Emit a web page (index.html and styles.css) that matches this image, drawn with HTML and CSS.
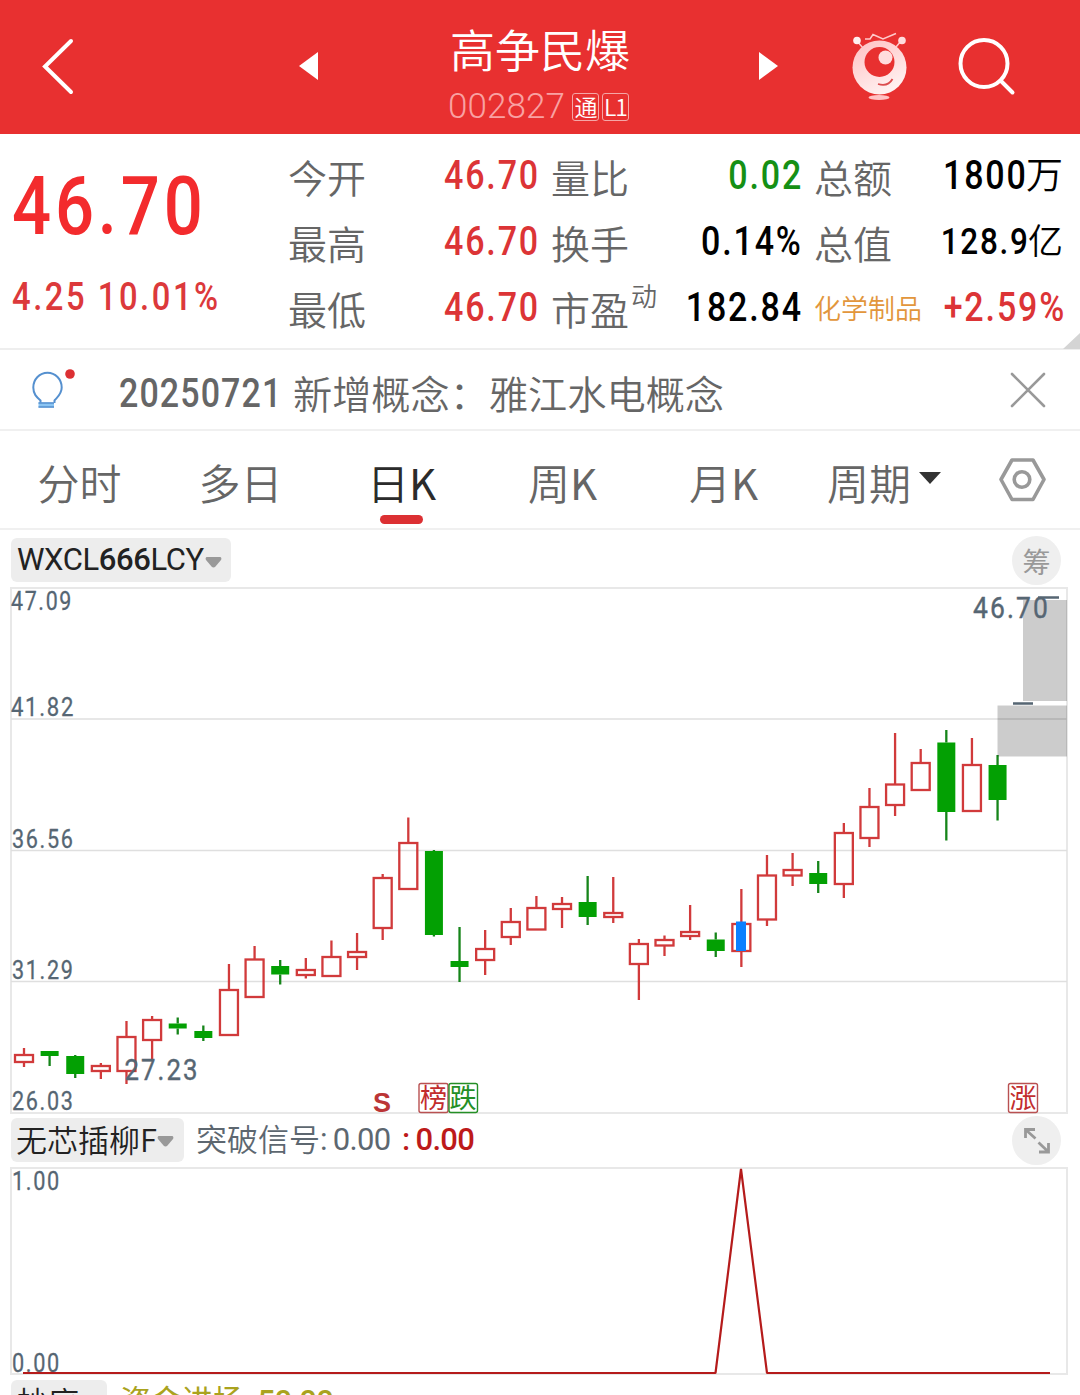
FILE: index.html
```html
<!DOCTYPE html>
<html lang="zh-CN">
<head>
<meta charset="utf-8">
<title>高争民爆 002827</title>
<link rel="stylesheet" href="styles.css">
</head>
<body>
<header class="header">
  <svg class="back" width="40" height="60" viewBox="0 0 40 60"><path d="M31 5 5 30.500 31 56" fill="none" stroke="#fff" stroke-width="4" stroke-linecap="round"/></svg>
  <svg class="prev" width="20" height="28" viewBox="0 0 20 28"><path d="M19 0V28L0 14Z" fill="#fff"/></svg>
  <div class="stock">
    <h1 class="stock-name">高争民爆</h1>
    <div class="stock-code"><span class="code">002827</span><span class="tag">通</span><span class="tag">L1</span></div>
  </div>
  <svg class="next" width="20" height="28" viewBox="0 0 20 28"><path d="M0 0V28L19 14Z" fill="#fff"/></svg>
  <svg class="robot" width="60" height="74" viewBox="850 30 60 74">
    <defs><linearGradient id="skin" x1="0" y1="0" x2="0.5" y2="1"><stop offset="0" stop-color="#ffc2c4"/><stop offset="0.35" stop-color="#ffd0d1"/><stop offset="1" stop-color="#fff0f0"/></linearGradient></defs>
    <g stroke="#ffc9ca" fill="none" stroke-width="1.500"><path d="M857 41 863 48M901 41 896 47"/><path d="M865 39H870L873 34.500 883 39 896 33.500"/></g>
    <circle cx="857" cy="40.500" r="3.800" fill="#fff0f0"/><circle cx="902" cy="40.500" r="3.800" fill="#ffdcdd"/>
    <circle cx="879.500" cy="67.500" r="27" fill="url(#skin)"/>
    <circle cx="879.500" cy="62" r="15" fill="#e83030"/><circle cx="885.500" cy="57.500" r="7" fill="#ffdcdd"/>
    <path d="M878 84Q888 87 892.500 79" fill="none" stroke="#dc4b4d" stroke-width="1.800"/>
    <ellipse cx="879" cy="97.500" rx="10.500" ry="2.400" fill="#ffc2c4"/>
  </svg>
  <svg class="search" width="60" height="62" viewBox="956 36 60 62"><g fill="none" stroke="#fff" stroke-width="4" stroke-linecap="round"><circle cx="984" cy="63.500" r="23.500"/><path d="M1001 81 1012.500 92.500"/></g></svg>
</header>

<section class="quote">
  <div class="price-block">
    <div class="price"><span class="num">46.70</span></div>
    <div class="change"><span class="num">4.25 10.01%</span></div>
  </div>
  <dl class="facts facts-a">
    <div><dt>今开</dt><dd class="up num">46.70</dd></div>
    <div><dt>最高</dt><dd class="up num">46.70</dd></div>
    <div><dt>最低</dt><dd class="up num">46.70</dd></div>
  </dl>
  <dl class="facts facts-b">
    <div><dt>量比</dt><dd class="down num">0.02</dd></div>
    <div><dt>换手</dt><dd class="num">0.14%</dd></div>
    <div><dt>市盈<sup>动</sup></dt><dd class="num">182.84</dd></div>
  </dl>
  <dl class="facts facts-c">
    <div><dt>总额</dt><dd><span class="num">1800</span><i>万</i></dd></div>
    <div><dt>总值</dt><dd class="small"><span class="num">128.9</span><i>亿</i></dd></div>
    <div><dt class="sector">化学制品</dt><dd class="up num">+2.59%</dd></div>
  </dl>
  <svg class="corner" width="17" height="16" viewBox="0 0 17 16"><path d="M17 0V16H0Z" fill="#d4d4d4"/></svg>
</section>

<section class="notice">
  <svg class="bulb" width="48" height="44" viewBox="30 367 48 44">
    <path d="M40.500 403V400.500C36.500 397 33.300 394 33.300 387.500A14.200 14.800 0 0 1 61.700 387.500C61.700 394 57.500 397 54.500 400.500V403" fill="none" stroke="#5590cf" stroke-width="2"/>
    <rect x="38.500" y="402.500" width="15.500" height="5" fill="#8bc5f3"/><path d="M38.500 403H54M38.500 407H54" stroke="#5590cf" stroke-width="1.600"/>
    <circle cx="70" cy="374" r="4.800" fill="#dc3033"/>
  </svg>
  <p class="notice-text"><span class="num">20250721</span><span>新增概念：雅江水电概念</span></p>
  <svg class="close" width="36" height="36" viewBox="0 0 36 36"><path d="M2 2 34 34M34 2 2 34" stroke="#999" stroke-width="2.600" stroke-linecap="round"/></svg>
</section>

<nav class="tabs">
  <span class="tab">分时</span><span class="tab">多日</span><span class="tab active">日<b>K</b></span><span class="tab">周<b>K</b></span><span class="tab">月<b>K</b></span><span class="tab period">周期<svg width="22" height="12" viewBox="0 0 22 12"><path d="M0 0H22L11 12Z" fill="#333"/></svg></span>
  <svg class="settings" width="48" height="46" viewBox="998 457 48 46"><g fill="none" stroke="#999" stroke-width="3.600" stroke-linejoin="round"><path d="M1012 460H1033L1044 479.500 1033 499.500H1012L1001 479.500Z"/><circle cx="1022" cy="479.500" r="7.800"/></g></svg>
</nav>

<div class="toolbar main-tools">
  <div class="chip latin"><span>WXCL<b>666</b>LCY</span><svg width="17" height="11" viewBox="0 0 17 11"><path d="M1.500 0H15.500Q17 1 16 3L10.500 9.500Q8.500 11.500 6.500 9.500L1 3Q0 1 1.500 0Z" fill="#999"/></svg></div>
  <div class="round">筹</div>
</div>
<svg class="chart" width="1080" height="527" viewBox="0 587 1080 527">
  <path class="frame" d="M11 588H1067V1113H11Z"/>
  <path class="grid" d="M11 719H1067M11 850.500H1067M11 981.500H1067"/>
  <g id="candles"></g>
  <rect x="736" y="921.500" width="10" height="29.500" fill="#0a80ff"/>
  <g fill="#000" fill-opacity=".2"><rect x="1023" y="600" width="44" height="101"/><rect x="997.500" y="705.500" width="69.500" height="51"/></g>
  <path d="M1013 703.500H1033M1038 597.500H1059" stroke="#566673" stroke-width="2.600"/>
  <g class="axis">
    <text x="11" y="610" textLength="62" lengthAdjust="spacingAndGlyphs">47.09</text>
    <text x="11" y="716" textLength="64" lengthAdjust="spacingAndGlyphs">41.82</text>
    <text x="12" y="848" textLength="62.500" lengthAdjust="spacingAndGlyphs">36.56</text>
    <text x="12" y="979" textLength="62.500" lengthAdjust="spacingAndGlyphs">31.29</text>
    <text x="12" y="1110" textLength="62.500" lengthAdjust="spacingAndGlyphs">26.03</text>
  </g>
  <g class="peak">
    <text x="973" y="617.500" textLength="77" lengthAdjust="spacingAndGlyphs">46.70</text>
    <text x="124.500" y="1079.500" textLength="75" lengthAdjust="spacingAndGlyphs">27.23</text>
  </g>
  <text class="sell" x="373" y="1111.500">S</text>
  <g class="mark red"><rect x="419" y="1083.500" width="29" height="29" rx="2"/><text x="420" y="1107.500">榜</text></g>
  <g class="mark green"><rect x="449" y="1083.500" width="28.500" height="29" rx="2"/><text x="449.500" y="1107.500">跌</text></g>
  <g class="mark red"><rect x="1008.500" y="1083.500" width="29" height="29" rx="2"/><text x="1009.500" y="1107.500">涨</text></g>
</svg>

<div class="toolbar sub-tools">
  <div class="chip">无芯插柳F<svg width="17" height="11" viewBox="0 0 17 11"><path d="M1.500 0H15.500Q17 1 16 3L10.500 9.500Q8.500 11.500 6.500 9.500L1 3Q0 1 1.500 0Z" fill="#999"/></svg></div>
  <div class="signal">突破信号<span class="value">: 0.00</span><span class="value hot">: 0.00</span></div>
  <div class="round"><svg width="28" height="28" viewBox="0 0 28 28"><path d="M2.500 11V2.500H12M3 3 12.500 11.500M25.500 16V25H16M25 24.500 15.500 15.500" fill="none" stroke="#999" stroke-width="2.800"/></svg></div>
</div>
<svg class="chart" width="1080" height="209" viewBox="0 1167 1080 209">
  <path class="frame" d="M11 1168H1067V1374H11Z"/>
  <g class="axis"><text x="12" y="1190" textLength="49" lengthAdjust="spacingAndGlyphs">1.00</text><text x="12" y="1372" textLength="49" lengthAdjust="spacingAndGlyphs">0.00</text></g>
  <path d="M23 1373H715.500L741 1169 767 1373H1050" fill="none" stroke="#b51b1b" stroke-width="2.200" stroke-linejoin="bevel"/>
</svg>
<div class="toolbar last-tools">
  <div class="chip">抄底</div>
  <div class="flow">资金进场<span class="value">: 50.00</span></div>
</div>
<script src="script.js"></script>
</body>
</html>
```
FILE: styles.css
```css
* { box-sizing: border-box; }
body { margin: 0; width: 1080px; height: 1395px; overflow: hidden; background: #fff; font-family: Roboto, "Noto Sans CJK SC", sans-serif; font-weight: 350; color: #000; }
svg { display: block; flex: none; }
h1, dl, dd, p { margin: 0; }
b { font-weight: 400; }
.num { display: inline-block; white-space: pre; font-weight: 500; letter-spacing: .055em; margin-right: -.05em; transform: scaleX(.85); transform-origin: right center; }

.header { display: flex; height: 134px; background: #e83030; color: #fff; }
.back { margin: 36px 0 0 40px; }
.prev { margin: 52px 0 0 219px; }
.stock { width: 184px; margin: 19px 0 0 129px; }
.stock-name { font-size: 45px; font-weight: 350; line-height: 60px; text-align: center; font-family: "Noto Sans CJK SC", sans-serif; }
.stock-code { display: flex; align-items: center; height: 30px; margin-top: 13px; }
.code { width: 126px; font-size: 35px; line-height: 30px; font-weight: 300; letter-spacing: .1px; color: #f9a1a2; }
.tag { flex: none; width: 27px; height: 28px; margin-right: 3px; border: 1.5px solid #f5a6a6; border-radius: 3px; font: 350 23px/25px "Noto Sans CJK SC", sans-serif; text-align: center; letter-spacing: -1px; }
.next { margin: 52px 0 0 127px; }
.robot { margin: 30px 0 0 71px; }
.search { margin: 36px 0 0 46px; }

.quote { position: relative; display: flex; height: 216px; border-bottom: 2px solid #eee; }
.price-block { width: 289px; padding-left: 12px; color: #f32b2d; }
.price { height: 100px; margin-top: 22px; font-size: 81px; line-height: 101px; }
.price .num, .change .num, .notice .num { transform-origin: left center; }
.change { font-size: 38.5px; line-height: 50px; margin-top: 16px; color: #dc393b; }
.change .num { letter-spacing: .078em; }
.facts { padding-top: 9px; }
.facts-a { width: 249px; margin-right: 14px; }
.facts-b { width: 249px; margin-right: 14px; }
.facts-c { width: 248px; }
.facts > div { display: flex; justify-content: space-between; align-items: center; height: 66px; line-height: 66px; }
.facts dt { font: 350 39px/66px "Noto Sans CJK SC", sans-serif; color: #666; white-space: nowrap; margin-left: -1px; }
.facts dd { font-size: 40px; white-space: nowrap; }
.facts dd .num { margin-right: 0; }
.facts sup { font-size: 26px; line-height: 0; vertical-align: 19px; margin-left: 2px; }
.facts i { margin-left: -2px; font: 350 37px/60px "Noto Sans CJK SC", sans-serif; }
.facts .small { font-size: 37px; }
.facts .small i { font-size: 35px; }
.facts .sector { font-size: 27px; color: #e2963c; }
.up { color: #dc3436; }
.down { color: #159015; }
.corner { position: absolute; right: 0; bottom: -1px; }

.notice { display: flex; height: 81px; border-bottom: 2px solid #f0f0f0; }
.bulb { margin: 17px 0 0 30px; }
.notice-text { display: flex; align-items: center; width: 932px; height: 84px; padding-left: 41px; font-size: 39.2px; color: #666; white-space: nowrap; }
.notice-text .num { width: 176px; font-size: 40px; line-height: 44px; padding-top: 4px; letter-spacing: .032em; }
.close { margin: 22px 0 0; }

.tabs { display: flex; height: 99px; border-bottom: 2px solid #f0f0f0; color: #666; }
.tab { position: relative; width: 161px; font: 350 42px/98px "Noto Sans CJK SC", sans-serif; text-align: center; padding: 2px 2px 0 0; }
.tab.active { color: #2b2b2b; }
.tab.active::after { content: ""; position: absolute; left: 58px; bottom: 4px; width: 43px; height: 9px; border-radius: 5px; background: #dc3033; }
.period { display: flex; align-items: center; width: 150px; margin-left: 22px; gap: 8px; padding-top: 4px; }
.period svg { margin-top: -8px; }
.settings { margin: 26px 0 0 21px; }

.toolbar { display: flex; padding: 0 19px 0 11px; }
.main-tools { height: 57px; padding-top: 8px; }
.chip { display: flex; align-items: center; height: 44px; padding: 0 0 2px 6px; border-radius: 6px; background: #ededed; color: #222; font: 350 31px/42px "Noto Sans CJK SC", sans-serif; white-space: nowrap; }
.chip svg { margin: 5px 0 0 0; }
.chip.latin { width: 220px; font-family: Roboto, sans-serif; font-weight: 400; font-size: 31px; letter-spacing: -.4px; padding-top: 1px; }
.chip.latin b { font-weight: 500; }
.chip.latin svg { margin-left: 1px; }
.round { display: flex; align-items: center; justify-content: center; width: 49px; height: 49px; margin: -2px 0 0 auto; border-radius: 50%; background: #efefef; color: #999; font: 400 28px/48px "Noto Sans CJK SC", sans-serif; }
.sub-tools { height: 53px; padding-top: 4px; }
.sub-tools .chip { width: 173px; padding-left: 5px; }
.signal, .flow { display: flex; margin-left: 12px; font: 350 31px/40px "Noto Sans CJK SC", sans-serif; color: #5d6770; white-space: nowrap; }
.value { width: 82px; font: 400 31px/43px Roboto, sans-serif; letter-spacing: -.7px; word-spacing: -1px; }
.hot { color: #bd1a1a; font-weight: 500; }
.last-tools { height: 19px; padding-top: 4px; }
.last-tools .chip { width: 96px; }
.flow { color: #aaa31e; font-weight: 400; line-height: 38px; margin-left: 13px; }
.flow .value { width: 100px; font-weight: 500; }

.frame { fill: none; stroke: #e8e8e8; stroke-width: 2; }
.grid { stroke: #dfdfdf; stroke-width: 1.3; }
.axis { font: 400 26px Roboto, sans-serif; letter-spacing: 2px; fill: #566673; stroke: #566673; stroke-width: .3; }
.peak { font: 400 30px Roboto, sans-serif; letter-spacing: 2.4px; fill: #566673; stroke: #566673; stroke-width: .4; }
.sell { font: 700 27px "Liberation Sans", sans-serif; fill: #bb3536; }
.mark { font: 400 27px "Noto Sans CJK SC", sans-serif; }
.mark rect { fill: #fff; stroke-width: 1.4; }
.red { fill: #c22d2e; stroke: none; }
.red rect { stroke: #b95152; }
.green { fill: #248f26; }
.green rect { stroke: #248f26; }
.rise { fill: none; stroke: #d13a3b; stroke-width: 2.3; }
.fall { fill: #03a003; stroke: #16851a; stroke-width: 2.3; }
.fall rect { stroke: none; }
```
FILE: script.js
```js
// Each row: direction, high, body top, body bottom, low (chart y coordinates).
const candles = [
  ["r",1048,1055,1062,1067],["g",1051,1051,1056,1066],["g",1055,1056,1074,1078],["r",1063,1066,1071,1079],
  ["r",1021,1037,1071,1084],["r",1016,1020,1040,1060],["g",1017.5,1023.5,1028.5,1034.5],["g",1025.5,1031,1038,1041],
  ["r",964,990,1035,1035],["r",946,959.5,997,998],["g",960,966,974.5,984.5],["r",958,970,975,978.5],
  ["r",940.5,957,976,976],["r",933,952,957,970],["r",874,878,928,940],["r",817.5,843,889,889],
  ["g",850,851,935,936.5],["g",927,961,967,982],["r",930,949,960,975],["r",908,922,937,945],
  ["r",896,908,929.5,929.5],["r",897,904,909,928],["g",876,902,917,925],["r",877,913,917,923],
  ["r",939,944,964,1000],["r",935.5,940,945.5,956],["r",905,932,936,940],["g",932.5,939.5,951,957],
  ["r",889,924,951,967],["r",855,875.5,919.5,926],["r",853,870,875.5,886],["g",861,873,884,893],
  ["r",823,833,884,898],["r",788,807,838,847],["r",733,784.5,805,816],["r",749,763,790,790],
  ["g",730,742.5,812,840.5],["r",738,765,811,811],["g",755,765,800,820.5]
];
document.getElementById("candles").innerHTML = candles.map(([kind, high, top, bottom, low], i) => {
  const x = 24 + i * 25.62;
  return `<g class="${kind === "r" ? "rise" : "fall"}"><path d="M${x} ${high}V${top}M${x} ${bottom}V${low}"/><rect x="${x - 9}" y="${top}" width="18" height="${bottom - top}"/></g>`;
}).join("");
```
